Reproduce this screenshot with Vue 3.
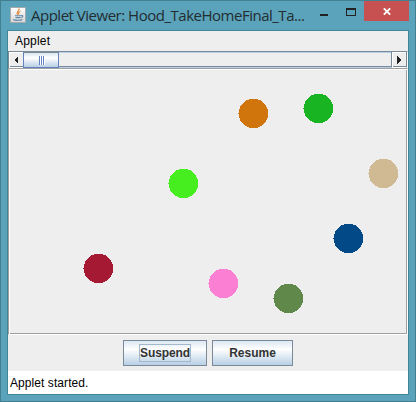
<script setup>
const balls = [
  { x: 253.5, y: 113.5, color: '#cf750b' },
  { x: 318.5, y: 108.5, color: '#18b422' },
  { x: 183.5, y: 183.5, color: '#47ee1f' },
  { x: 383.5, y: 173.5, color: '#d0ba94' },
  { x: 348.5, y: 238.5, color: '#024a87' },
  { x: 98.5, y: 268.5, color: '#a61932' },
  { x: 223.5, y: 283.5, color: '#fb7fd3' },
  { x: 288.5, y: 298.5, color: '#5f884a' },
]
</script>

<template>
  <div class="window">
    <header class="titlebar">
      <svg class="java" width="16" height="16" viewBox="0 0 16 16">
        <defs>
          <linearGradient id="tile" x1="0" y1="0" x2="0" y2="1">
            <stop offset="0" stop-color="#fff" /><stop offset="1" stop-color="#d5d5d5" />
          </linearGradient>
        </defs>
        <rect x=".5" y=".5" width="15" height="15" rx=".5" fill="url(#tile)" stroke="#a5aaae" />
        <path d="M9.2 1.5C9.6 3.7 5.6 4.5 7.5 7.8M10.5 4.2C8.3 5.2 8 6 9 7.8" fill="none" stroke="#e58a3c" stroke-width="1.2" />
        <path d="M5 8.7h6M5.5 10.6h5M3.2 12.5c2 1.2 7.5 1 9.2 0M11 8.7c2.5-.8 2.3 1.2.3 2" fill="none" stroke="#5f87a6" stroke-width="1.1" />
      </svg>
      <span class="title">Applet Viewer: Hood_TakeHomeFinal_Ta...</span>
      <svg class="controls" width="40" height="16" viewBox="0 0 40 16" shape-rendering="crispEdges">
        <rect x="0" y="7" width="8" height="2" fill="#222" />
        <path d="M26 1h10v8H26zM27 3v5h8V3z" fill="#222" fill-rule="evenodd" />
      </svg>
      <div class="close">
        <svg width="8" height="7" viewBox="0 0 8 7"><path d="M.8.3 7.2 6.7M7.2.3.8 6.7" stroke="#fff" stroke-width="1.8" /></svg>
      </div>
    </header>
    <main class="client">
      <nav class="menu"><span class="menu-text">Applet</span></nav>
      <div class="scroll">
        <div class="arrow left"><svg width="4" height="8" viewBox="0 0 4 8" shape-rendering="crispEdges"><path d="M4 0v8L0 4z" fill="#222" /></svg></div>
        <div class="thumb"><i></i><i></i><i></i></div>
        <div class="track"></div>
        <div class="arrow right"><svg width="4" height="8" viewBox="0 0 4 8" shape-rendering="crispEdges"><path d="M0 0v8l4-4z" fill="#222" /></svg></div>
      </div>
      <div class="stage">
        <svg width="397" height="264" viewBox="9 69 397 264" shape-rendering="crispEdges">
          <g v-for="b in balls" :key="b.color" :fill="b.color">
            <circle :cx="b.x" :cy="b.y" r="14.8" />
            <rect :x="b.x - 15.5" :y="b.y - .5" width="1" height="1" />
          </g>
        </svg>
      </div>
      <div class="buttons">
        <button class="btn suspend"><span class="label focus">Suspend</span></button>
        <button class="btn resume"><span class="label">Resume</span></button>
      </div>
      <footer class="status">Applet started.</footer>
    </main>
  </div>
</template>

<style>
body { margin: 0; }
</style>

<style scoped>
* { box-sizing: border-box; }
.window {
  width: 416px; height: 402px; padding: 0 6px 6px;
  background: #5ba3bb; border: 1px solid #417f91;
  font-family: "Liberation Sans", Arial, sans-serif; color: #000;
}
.titlebar { display: flex; height: 29px; padding-left: 3px; }
.java { margin-top: 6px; flex: none; }
.title {
  flex: none; width: 289px; margin-left: 5px; padding-top: 4px; white-space: nowrap;
  font: 15px/21px "Open Sans", "Noto Sans", sans-serif; color: #222d31;
  letter-spacing: -.49px;
}
.controls { flex: none; margin: 6px 0 0; }
.close { display: flex; align-items: center; justify-content: center; width: 45px; height: 20px; margin-left: auto; background: #c75050; }
.close svg { margin-top: 1px; }
.client { width: 402px; height: 365px; border: 1px solid #3f8699; background: #eee; }
.menu { height: 20px; padding-left: 7px; font-size: 12px; line-height: 20px; }
.menu-text { letter-spacing: .2px; }
.scroll { display: flex; height: 17px; border-top: 1px solid #7a8a99; border-left: 1px solid #7a8a99; border-right: 1px solid #fff; background: #eee; }
.arrow { display: flex; align-items: center; justify-content: center; height: 16px; border-bottom: 1px solid #fff; box-shadow: inset 1px 1px #fff, inset 0 -1px #7a8a99; }
.arrow.left { width: 14px; }
.arrow.right { width: 16px; border-left: 1px solid #7a8a99; border-right: 1px solid #7a8a99; }
.thumb {
  display: flex; align-items: center; justify-content: center; gap: 1px; width: 36px; height: 16px;
  border: 1px solid #6382bf; border-top-color: #7a8a99;
  background: linear-gradient(#d9e6f2, #fff 35%, #b8cfe5);
}
.thumb i { width: 1px; height: 9px; background: #6382bf; box-shadow: 1px 0 #fff; }
.track { flex: 1; height: 16px; border-top: 1px solid #b8cfe5; border-bottom: 1px solid #b8cfe5; box-shadow: inset 0 -1px #7a8a99; }
.stage { height: 267px; border: 1px solid #a0a0a0; border-right-color: #fff; border-bottom-color: #fff; box-shadow: inset 1px 1px #fff, inset -1px -1px #a0a0a0; }
.stage svg { display: block; }
.buttons { display: flex; gap: 5px; height: 36px; padding: 5px 0 0 115px; }
.btn {
  display: flex; align-items: center; justify-content: center; height: 26px; padding: 0;
  border: 1px solid #7a8a99; background: linear-gradient(#dde8f3, #fff 35%, #b8cfe5);
  color: #333; font: bold 12px/15px "Liberation Sans", Arial, sans-serif;
}
.suspend { width: 84px; }
.resume { width: 81px; }
.label { padding-top: 1px; }
.focus { display: block; width: 52px; height: 18px; padding: 0; border: 1px solid #a3b8cc; line-height: 17px; text-align: center; letter-spacing: -.1px; }
.status { height: 23px; padding-left: 2px; background: #fff; font-size: 12px; line-height: 24px; letter-spacing: .07px; }
</style>
